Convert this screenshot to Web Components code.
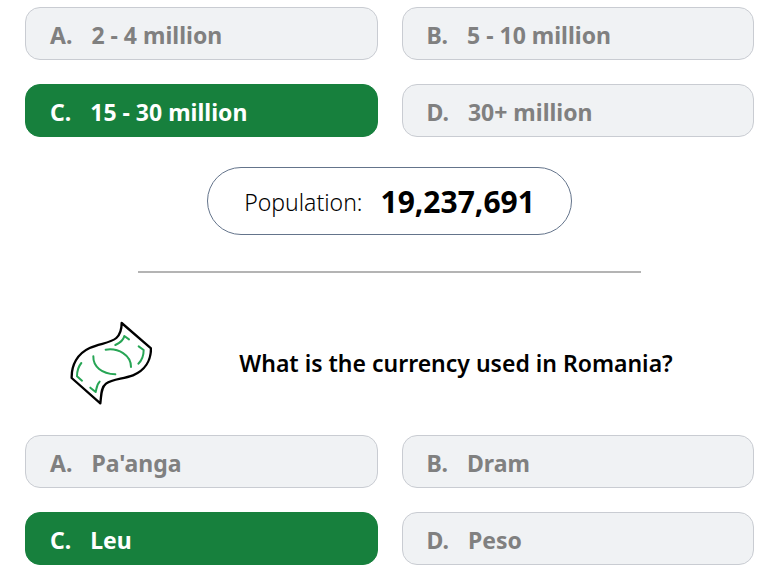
<!DOCTYPE html>
<html lang="en">
<head>
<meta charset="utf-8">
<meta name="viewport" content="width=device-width, initial-scale=1">
<title>Country quiz</title>
<style>
body { margin: 0; background: #fff; color: #000; font-family: "Noto Sans", "Open Sans", sans-serif; }
</style>
</head>
<body>
<quiz-page>
  <quiz-choices label="Population">
    <quiz-choice letter="A">2 - 4 million</quiz-choice>
    <quiz-choice letter="B">5 - 10 million</quiz-choice>
    <quiz-choice letter="C" correct>15 - 30 million</quiz-choice>
    <quiz-choice letter="D">30+ million</quiz-choice>
  </quiz-choices>
  <quiz-fact label="Population:">19,237,691</quiz-fact>
  <quiz-divider></quiz-divider>
  <quiz-question><banknote-icon slot="icon"></banknote-icon>What is the currency used in Romania?</quiz-question>
  <quiz-choices label="Currency">
    <quiz-choice letter="A">Pa'anga</quiz-choice>
    <quiz-choice letter="B">Dram</quiz-choice>
    <quiz-choice letter="C" correct>Leu</quiz-choice>
    <quiz-choice letter="D">Peso</quiz-choice>
  </quiz-choices>
</quiz-page>
<script>
function define(name, html, setup) {
  const template = document.createElement('template');
  template.innerHTML = html;
  customElements.define(name, class extends HTMLElement {
    constructor() {
      super();
      this.attachShadow({ mode: 'open' }).append(template.content.cloneNode(true));
    }
    connectedCallback() { if (setup) setup(this, this.shadowRoot); }
  });
}

define('quiz-page', `
<style>
:host { display: block; }
main { display: flex; flex-direction: column; padding: 7px 22px 5px 25px; }
</style>
<main><slot></slot></main>`);

define('quiz-choices', `
<style>
:host { display: block; }
div { display: grid; grid-template-columns: 1fr 1fr; gap: 24px; }
</style>
<div role="group"><slot></slot></div>`, (el, root) => {
  root.querySelector('div').setAttribute('aria-label', el.getAttribute('label'));
});

define('quiz-choice', `
<style>
:host { display: block; }
button {
  box-sizing: border-box; width: 100%; min-height: 53px; padding: 10px 24px 8px;
  display: flex; align-items: center; gap: 19px;
  border: 1px solid #c9ccd2; border-radius: 15px;
  background: #f0f2f4; color: #808080;
  font: 700 23px/32px "Noto Sans", "Open Sans", sans-serif; text-align: left;
}
:host([correct]) button { background: #17803d; border-color: #17803d; color: #fff; }
</style>
<button type="button"><span class="letter"></span><span><slot></slot></span></button>`, (el, root) => {
  root.querySelector('.letter').textContent = el.getAttribute('letter') + '.';
});

define('quiz-fact', `
<style>
:host { display: flex; justify-content: center; margin-top: 30px; }
p {
  box-sizing: border-box; min-height: 68px; margin: 0; padding: 2px 36px 0;
  display: flex; align-items: center; gap: 18px;
  border: 1px solid #64748b; border-radius: 34px;
  font-size: 23px; line-height: 36px;
}
span { font-weight: 300; }
strong { font-size: 30px; font-weight: 700; }
</style>
<p><span></span><strong><slot></slot></strong></p>`, (el, root) => {
  root.querySelector('span').textContent = el.getAttribute('label');
});

define('quiz-divider', `
<style>
:host { display: block; margin-top: 36px; }
hr { width: 69%; height: 2px; margin: 0 auto; border: 0; background: #b4b4b4; }
</style>
<hr>`);

define('quiz-question', `
<style>
:host { display: grid; grid-template-columns: auto 1fr; align-items: center; gap: 6px; margin: 48px 0 30px; padding-left: 45px; }
h2 { margin: 0; font-size: 23px; line-height: 32px; font-weight: 600; text-align: center; }
</style>
<slot name="icon"></slot><h2><slot></slot></h2>`);

define('banknote-icon', `
<style>
:host { display: block; }
svg { display: block; width: 82px; height: 84px; }
</style>
<svg viewBox="30 32 246 252" fill="none" stroke-linecap="round" stroke-linejoin="round" aria-hidden="true">
  <path stroke="#000" stroke-width="7" d="M185 38L273 114C273 151 254 181 219 195C187 207 158 205 138 220C122 232 124 256 121 279L35 203C34 164 52 130 89 113C118 99 151 99 169 83C182 71 185 57 185 38Z"/>
  <path stroke="#27a555" stroke-width="6" d="M166 104C177 99 190 91 193 77L207 87M236 108L251 119C251 135 247 149 235 160M137 118C175 112 213 134 213 170M100 138C99 169 125 190 166 192M64 158C53 171 51 184 51 198L66 211M91 232L107 245C110 233 110 223 119 214"/>
</svg>`);
</script>
</body>
</html>
